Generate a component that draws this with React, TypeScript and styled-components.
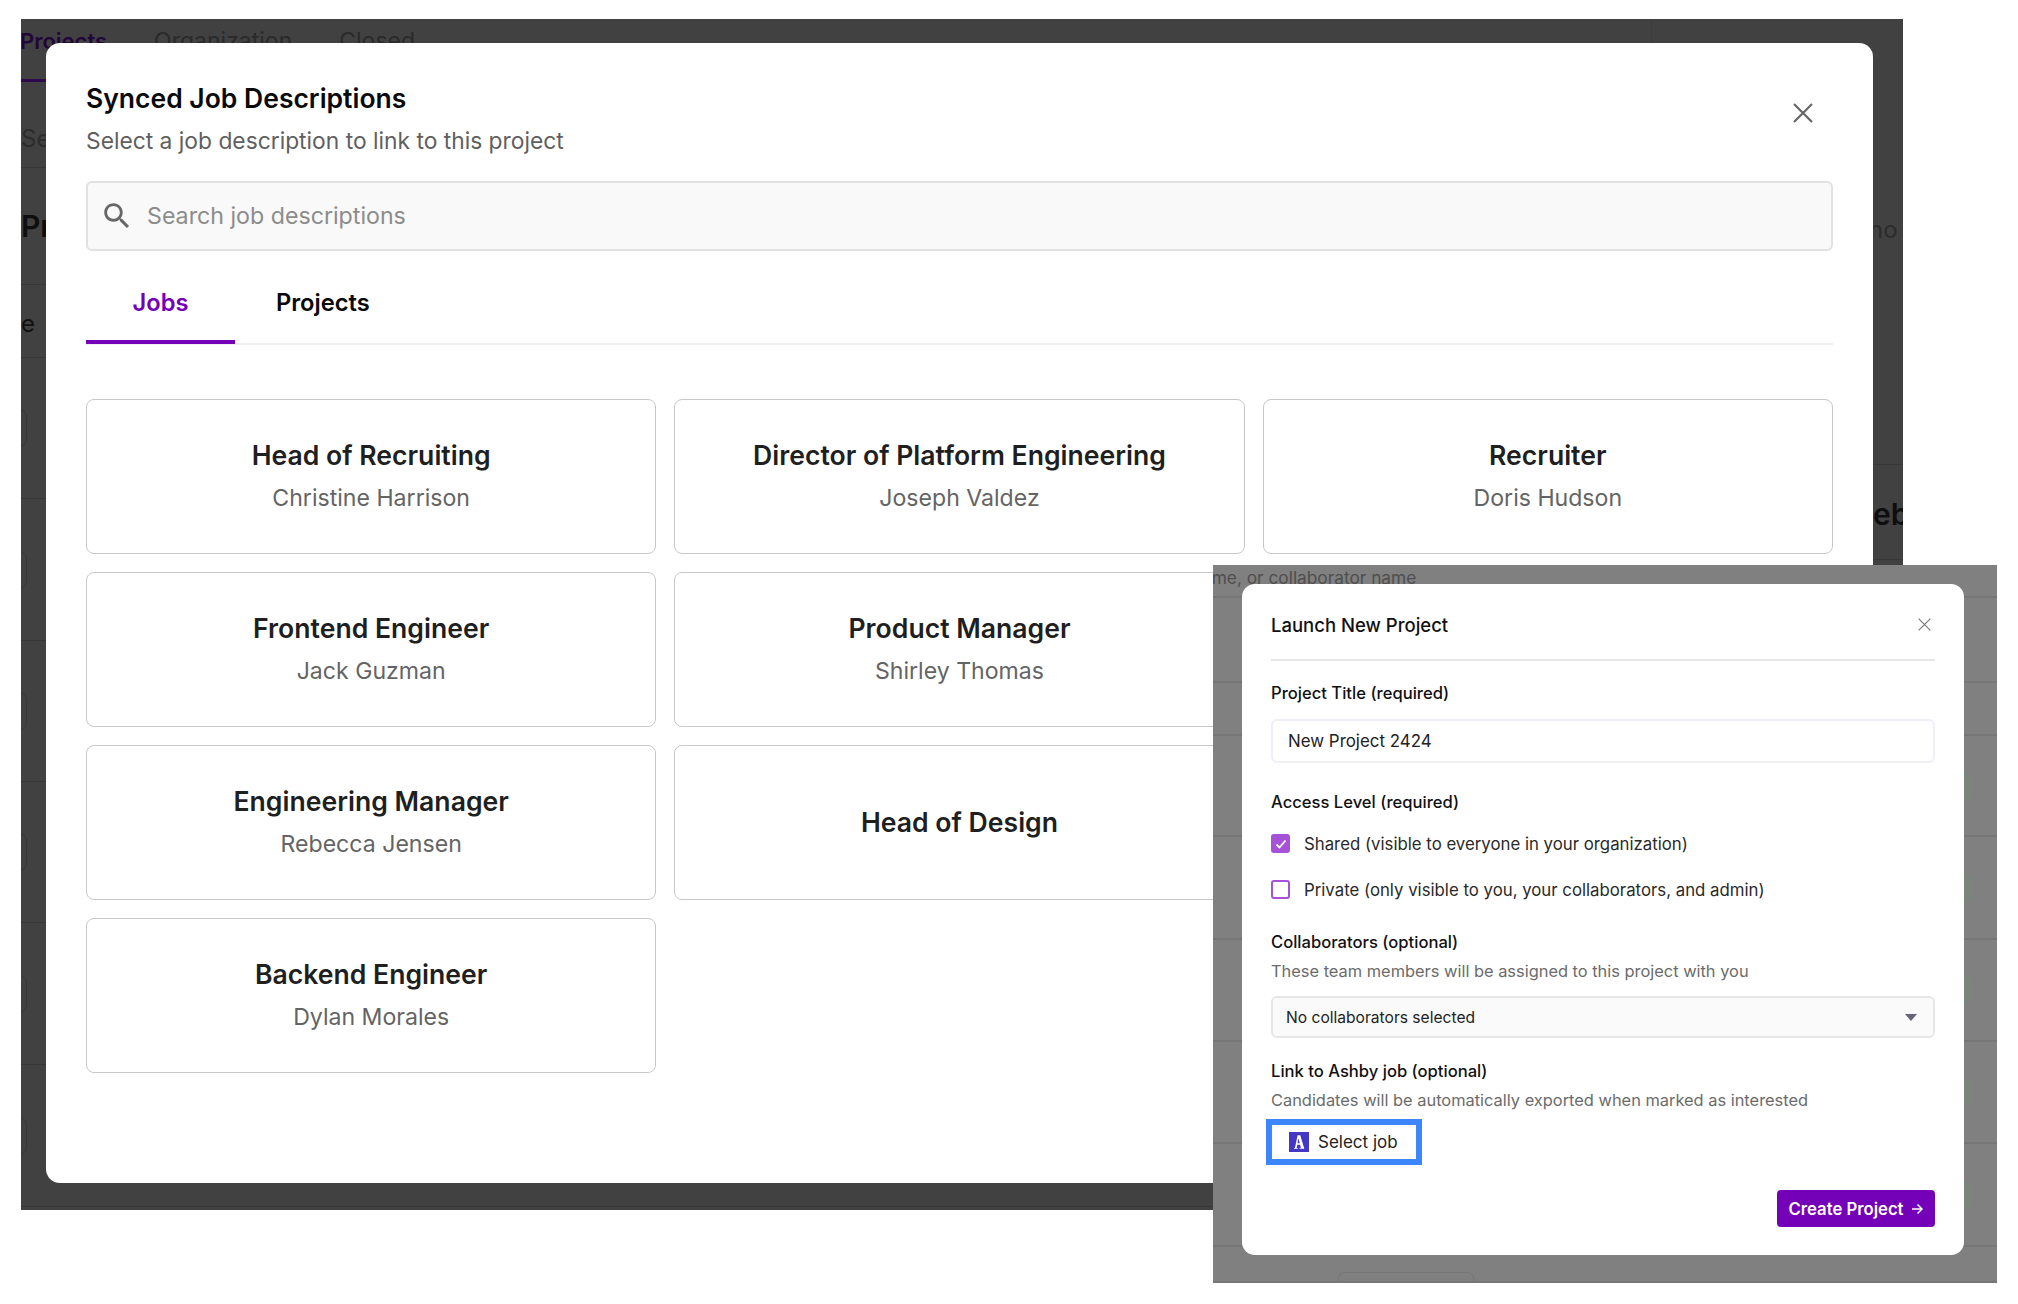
import React from 'react';
import styled, {createGlobalStyle} from "styled-components";

const GlobalStyle = createGlobalStyle`
  html, body {
    margin: 0;
    padding: 0;
    background: #fff;
  }
  * {
    box-sizing: border-box;
  }
  body {
    font-family: Inter, "Noto Sans", sans-serif;
    -webkit-font-smoothing: antialiased;
  }
`

const jobs = [
    {title: "Head of Recruiting", owner: "Christine Harrison"},
    {title: "Director of Platform Engineering", owner: "Joseph Valdez"},
    {title: "Recruiter", owner: "Doris Hudson"},
    {title: "Frontend Engineer", owner: "Jack Guzman"},
    {title: "Product Manager", owner: "Shirley Thomas"},
    null,
    {title: "Engineering Manager", owner: "Rebecca Jensen"},
    {title: "Head of Design", owner: ""},
    null,
    {title: "Backend Engineer", owner: "Dylan Morales"},
]

const CloseIcon = ({size, weight}: { size: number, weight: number }) => (
    <svg width={size} height={size} viewBox="0 0 20 20" fill="none" stroke="currentColor" strokeWidth={weight}>
        <path d="M1 1L19 19M19 1L1 19"/>
    </svg>
)

const AshbyLogo = () => (
    <svg width="20" height="20" viewBox="0 0 20 20">
        <rect width="20" height="20" fill="#4338c4"/>
        <path fill="#fff"
              d="M8.6 3.2h2.7l4 13.6h-4.7v-.8l1.3-.2-.8-3.1H8.4l-.8 3.2 1.2.1v.8H5v-.8l1-.2 2.6-12.6zm.9 3l-1 5h2.2l-1.2-5z"/>
    </svg>
)

export default function App() {
    return (
        <Canvas>
            <GlobalStyle/>
            <BackWindow>
                <BackMain>
                    <BackTabs>
                        <BackTab $active>Projects</BackTab>
                        <BackTab>Organization</BackTab>
                        <BackTab>Closed</BackTab>
                    </BackTabs>
                    <BackRow $h={29} $noLine/>
                    <BackRow $h={57}><BackMuted>Se</BackMuted></BackRow>
                    <BackRow $h={117}><BackHeading>Pro</BackHeading></BackRow>
                    <BackRow $h={73}><BackText>e</BackText></BackRow>
                    {[141, 142, 141, 141, 142, 142].map((h, i) => (
                        <BackRow key={i} $h={h}><BackPill/></BackRow>
                    ))}
                </BackMain>
                <BackAside>
                    <AsideRow $h={232} $noLine $pad={217} $bottom={6}><BackMuted>no p</BackMuted></AsideRow>
                    <AsideRow $h={186} $noLine/>
                    <AsideRow $h={28}/>
                    <AsideRow $h={95} $pad={221} $bottom={27}><BackHeading>eb</BackHeading></AsideRow>
                    <AsideRow $h={650}/>
                </BackAside>

                <JobsDialog>
                    <DialogHead>
                        <div>
                            <DialogTitle>Synced Job Descriptions</DialogTitle>
                            <DialogSubtitle>Select a job description to link to this project</DialogSubtitle>
                        </div>
                        <BigClose><CloseIcon size={20} weight={2.2}/></BigClose>
                    </DialogHead>
                    <SearchBar>
                        <svg width="34" height="34" viewBox="0 0 24 24" fill="#666">
                            <path
                                d="M15.5 14h-.79l-.28-.27C15.41 12.59 16 11.11 16 9.5 16 5.91 13.09 3 9.5 3S3 5.91 3 9.5 5.91 16 9.5 16c1.61 0 3.09-.59 4.23-1.57l.27.28v.79l5 4.99L20.49 19l-4.99-5zm-6 0C7.01 14 5 11.99 5 9.5S7.01 5 9.5 5 14 7.01 14 9.5 11.99 14 9.5 14z"/>
                        </svg>
                        <SearchHint>Search job descriptions</SearchHint>
                    </SearchBar>
                    <TabBar>
                        <Tab $active $pad={46.5}>Jobs</Tab>
                        <Tab $pad={41}>Projects</Tab>
                    </TabBar>
                    <JobGrid>
                        {jobs.map((job, i) => job
                            ? <JobCard key={i}>
                                <JobTitle>{job.title}</JobTitle>
                                {job.owner && <JobOwner>{job.owner}</JobOwner>}
                            </JobCard>
                            : <span key={i}/>)}
                    </JobGrid>
                </JobsDialog>
            </BackWindow>

            <FrontWindow>
                <FrontRow $h={33} $first><FrontText>ame, or collaborator name</FrontText></FrontRow>
                <FrontRow $h={85}/>
                <FrontRow $h={53}/>
                {[101, 103, 102, 102, 103].map((h, i) => (
                    <FrontRow key={i} $h={h}><FrontPill/></FrontRow>
                ))}
                <FrontRow $h={36}><FrontStub/></FrontRow>

                <ProjectDialog>
                    <ProjectHead>
                        <ProjectTitle>Launch New Project</ProjectTitle>
                        <SmallClose><CloseIcon size={13} weight={1.8}/></SmallClose>
                    </ProjectHead>
                    <FieldLabel $top={22}>Project Title (required)</FieldLabel>
                    <TitleInput>New Project 2424</TitleInput>
                    <FieldLabel $top={29}>Access Level (required)</FieldLabel>
                    <CheckRow $top={22}>
                        <CheckBox $checked>
                            <svg width="14" height="14" viewBox="0 0 14 14" fill="none" stroke="#fff"
                                 strokeWidth="1.8"><path d="M2.5 7.5L5.5 10.5L11.5 3.5"/></svg>
                        </CheckBox>
                        Shared (visible to everyone in your organization)
                    </CheckRow>
                    <CheckRow $top={27}>
                        <CheckBox/>
                        Private (only visible to you, your collaborators, and admin)
                    </CheckRow>
                    <FieldLabel $top={33}>Collaborators (optional)</FieldLabel>
                    <FieldHint>These team members will be assigned to this project with you</FieldHint>
                    <SelectBox>
                        No collaborators selected
                        <SelectArrow/>
                    </SelectBox>
                    <FieldLabel $top={23}>Link to Ashby job (optional)</FieldLabel>
                    <FieldHint>Candidates will be automatically exported when marked as interested</FieldHint>
                    <SelectJob>
                        <AshbyLogo/>
                        Select job
                    </SelectJob>
                    <DialogFooter>
                        <CreateButton>
                            Create Project
                            <svg width="14" height="14" viewBox="0 0 14 14" fill="none" stroke="#fff"
                                 strokeWidth="1.5"><path d="M2 7H12M7.5 2.5L12 7L7.5 11.5"/></svg>
                        </CreateButton>
                    </DialogFooter>
                </ProjectDialog>
            </FrontWindow>
        </Canvas>
    );
}

const Canvas = styled.div`
  position: relative;
  width: 2018px;
  height: 1304px;
  overflow: hidden;
  background: #fff;
`

const BackWindow = styled.section`
  position: absolute;
  left: 21px;
  top: 19px;
  width: 1882px;
  height: 1191px;
  display: flex;
  overflow: hidden;
  background: #414141;
`

const BackMain = styled.div`
  width: 1631px;
  flex: none;
  display: flex;
  flex-direction: column;
  border-right: 1px solid #3c3c3c;
`

const BackAside = styled.div`
  flex: 1;
  display: flex;
  flex-direction: column;
`

const BackTabs = styled.div`
  display: flex;
  gap: 47px;
  height: 63px;
  flex: none;
  margin-left: -1px;
`

const BackTab = styled.div<{ $active?: boolean }>`
  font-size: ${p => p.$active ? 22 : 23}px;
  line-height: 44px;
  font-weight: ${p => p.$active ? 600 : 400};
  color: ${p => p.$active ? "#21063a" : "#2a2a2a"};
  border-bottom: 3px solid ${p => p.$active ? "#2d0a4d" : "transparent"};
  height: 63px;
`

const BackRow = styled.div<{ $h: number, $noLine?: boolean }>`
  height: ${p => p.$h}px;
  flex: none;
  display: flex;
  align-items: center;
  border-bottom: ${p => p.$noLine ? "none" : "1px solid #383838"};
`

const AsideRow = styled.div<{ $h: number, $noLine?: boolean, $pad?: number, $bottom?: number }>`
  height: ${p => p.$h}px;
  flex: none;
  display: flex;
  align-items: flex-end;
  padding-left: ${p => p.$pad || 0}px;
  padding-bottom: ${p => p.$bottom || 0}px;
  white-space: nowrap;
  border-bottom: ${p => p.$noLine ? "none" : "1px solid #383838"};
`

const BackMuted = styled.span`
  font-size: 24px;
  line-height: 30px;
  color: #2c2c2c;
`

const BackHeading = styled.span`
  font-size: 30px;
  line-height: 36px;
  font-weight: 600;
  color: #0e0e0e;
`

const BackText = styled.span`
  font-size: 24px;
  line-height: 30px;
  color: #111;
  padding-top: 5px;
`

const BackPill = styled.div`
  width: 30px;
  height: 38px;
  margin-left: -24px;
  border: 1px solid #383838;
  border-radius: 8px;
`

const JobsDialog = styled.div`
  position: absolute;
  left: 25px;
  top: 24px;
  width: 1827px;
  height: 1140px;
  padding: 39px 40px 0;
  background: #fff;
  border-radius: 14px;
`

const DialogHead = styled.header`
  position: relative;
`

const DialogTitle = styled.h2`
  margin: 0;
  font-size: 26.5px;
  line-height: 32px;
  font-weight: 600;
  color: #0a0a0a;
`

const DialogSubtitle = styled.p`
  margin: 12px 0 0;
  font-size: 22.8px;
  line-height: 30px;
  color: #5f5f5f;
`

const BigClose = styled.span`
  position: absolute;
  right: 20px;
  top: 21px;
  display: flex;
  color: #666;
`

const SearchBar = styled.div`
  margin-top: 25px;
  height: 70px;
  display: flex;
  align-items: center;
  gap: 13px;
  padding: 0 0 1px 12px;
  background: #f9f9f9;
  border: 2px solid #e1e1e1;
  border-radius: 6px;
`

const SearchHint = styled.span`
  font-size: 23.2px;
  color: #8c8c8c;
`

const TabBar = styled.nav`
  margin-top: 19px;
  display: flex;
  height: 75px;
  border-bottom: 2px solid #efefef;
`

const Tab = styled.div<{ $active?: boolean, $pad: number }>`
  height: 74px;
  padding: 0 ${p => p.$pad}px 5px;
  display: flex;
  align-items: center;
  font-size: 23.7px;
  font-weight: 600;
  color: ${p => p.$active ? "#7400b8" : "#0a0a0a"};
  border-bottom: 4px solid ${p => p.$active ? "#7400b8" : "transparent"};
`

const JobGrid = styled.div`
  margin-top: 54px;
  display: grid;
  grid-template-columns: repeat(3, 1fr);
  grid-auto-rows: 155px;
  gap: 18px 18px;
`

const JobCard = styled.article`
  display: flex;
  flex-direction: column;
  align-items: center;
  justify-content: center;
  gap: 12px;
  padding-bottom: 1px;
  background: #fff;
  border: 1.5px solid #c8c8c8;
  border-radius: 8px;
`

const JobTitle = styled.div`
  font-size: 26.6px;
  line-height: 32px;
  font-weight: 600;
  color: #1f1f1f;
`

const JobOwner = styled.div`
  font-size: 23.1px;
  line-height: 30px;
  color: #646464;
`

const FrontWindow = styled.section`
  position: absolute;
  left: 1213px;
  top: 565px;
  width: 784px;
  height: 718px;
  overflow: hidden;
  display: flex;
  flex-direction: column;
  background: #808080;
`

const FrontRow = styled.div<{ $h: number, $first?: boolean }>`
  height: ${p => p.$h}px;
  flex: none;
  display: flex;
  align-items: ${p => p.$first ? "flex-start" : "center"};
  justify-content: ${p => p.$first ? "flex-start" : "flex-end"};
  border-bottom: 2px solid #767676;
  white-space: nowrap;
`

const FrontText = styled.span`
  margin-left: -11px;
  font-size: 17.3px;
  line-height: 26px;
  color: #4f4f4f;
`

const FrontPill = styled.div`
  width: 60px;
  height: 28px;
  margin-right: 26px;
  background: #7b857b;
  border-radius: 6px;
`

const FrontStub = styled.div`
  width: 136px;
  height: 10px;
  margin: 26px 523px 0 0;
  border: 1px solid #767676;
  border-bottom: none;
  border-radius: 6px 6px 0 0;
`

const ProjectDialog = styled.div`
  position: absolute;
  left: 29px;
  top: 19px;
  width: 722px;
  height: 671px;
  padding: 0 29px;
  display: flex;
  flex-direction: column;
  background: #fff;
  border-radius: 13px;
`

const ProjectHead = styled.header`
  height: 77px;
  flex: none;
  padding-top: 6px;
  display: flex;
  align-items: center;
  justify-content: space-between;
  border-bottom: 2px solid #e8e8e8;
`

const ProjectTitle = styled.h3`
  margin: 0;
  font-size: 18.5px;
  font-weight: 500;
  color: #111;
`

const SmallClose = styled.span`
  display: flex;
  margin-right: 4px;
  color: #777;
`

const FieldLabel = styled.div<{ $top: number }>`
  margin-top: ${p => p.$top}px;
  font-size: 16.6px;
  line-height: 20px;
  font-weight: 500;
  color: #111;
`

const FieldHint = styled.div`
  margin-top: 9px;
  font-size: 16.4px;
  line-height: 20px;
  color: #6b6b6b;
`

const TitleInput = styled.div`
  margin-top: 16px;
  height: 44px;
  display: flex;
  align-items: center;
  padding-left: 15px;
  font-size: 16.9px;
  color: #222;
  border: 2px solid #f0eef6;
  border-radius: 6px;
`

const CheckRow = styled.label<{ $top: number }>`
  margin-top: ${p => p.$top}px;
  height: 19px;
  display: flex;
  align-items: center;
  gap: 14px;
  font-size: 16.8px;
  color: #2a2a2a;
`

const CheckBox = styled.span<{ $checked?: boolean }>`
  width: 19px;
  height: 19px;
  flex: none;
  display: flex;
  align-items: center;
  justify-content: center;
  background: ${p => p.$checked ? "#a552d8" : "#fff"};
  border: 2px solid #a552d8;
  border-radius: 3px;
`

const SelectBox = styled.div`
  margin-top: 15px;
  height: 42px;
  display: flex;
  align-items: center;
  justify-content: space-between;
  padding: 1px 16px 0 13px;
  font-size: 15.6px;
  color: #222;
  background: #fafafa;
  border: 2px solid #e6e6e6;
  border-radius: 6px;
`

const SelectArrow = styled.span`
  width: 0;
  height: 0;
  border-left: 6px solid transparent;
  border-right: 6px solid transparent;
  border-top: 7px solid #667;
`

const SelectJob = styled.button`
  margin: 9px 0 0 -5px;
  width: 156px;
  height: 46px;
  flex: none;
  display: flex;
  align-items: center;
  gap: 9px;
  padding: 0 0 0 17px;
  font-family: inherit;
  font-size: 17px;
  color: #222;
  background: #fff;
  border: 6px solid #3c85fb;
  border-radius: 0;
`

const DialogFooter = styled.footer`
  margin-top: 25px;
  display: flex;
  justify-content: flex-end;
`

const CreateButton = styled.button`
  width: 158px;
  height: 37px;
  display: flex;
  align-items: center;
  justify-content: center;
  gap: 6px;
  padding: 0;
  font-family: inherit;
  font-size: 16.7px;
  font-weight: 600;
  color: #fff;
  background: #7400b8;
  border: none;
  border-radius: 4px;
`
